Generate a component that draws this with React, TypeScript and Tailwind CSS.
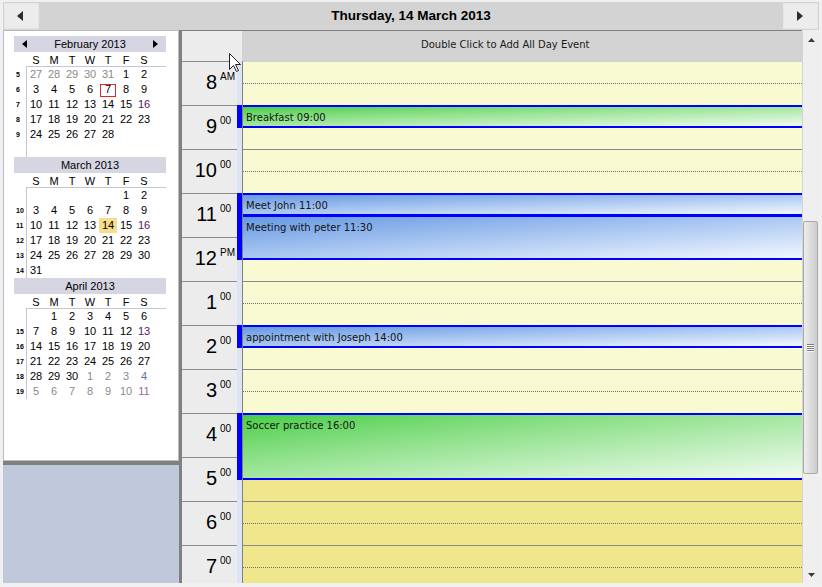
const HOURS = [
  { n: "8", s: "AM" },
  { n: "9", s: "00" },
  { n: "10", s: "00" },
  { n: "11", s: "00" },
  { n: "12", s: "PM" },
  { n: "1", s: "00" },
  { n: "2", s: "00" },
  { n: "3", s: "00" },
  { n: "4", s: "00" },
  { n: "5", s: "00" },
  { n: "6", s: "00" },
  { n: "7", s: "00" },
];

const ROW_H = 44;

const EVENTS = [
  { title: "Breakfast 09:00", start: 9, dur: 0.5, tone: "green" },
  { title: "Meet John 11:00", start: 11, dur: 0.5, tone: "blue" },
  { title: "Meeting with peter 11:30", start: 11.5, dur: 1, tone: "blue" },
  { title: "appointment with Joseph 14:00", start: 14, dur: 0.5, tone: "blue" },
  { title: "Soccer practice 16:00", start: 16, dur: 1.5, tone: "green" },
];

// ~ other month, ! selected (red box), * today, ^ purple, # blue-grey, . empty
const MONTHS = [
  {
    title: "February 2013",
    arrows: true,
    rows: [
      ["5", "27~ 28~ 29~ 30~ 31~ 1 2"],
      ["6", "3 4 5 6 7! 8 9"],
      ["7", "10 11 12 13 14 15 16^"],
      ["8", "17 18 19 20 21 22 23"],
      ["9", "24 25 26 27 28 . ."],
      ["", ". . . . . . ."],
    ],
  },
  {
    title: "March 2013",
    arrows: false,
    rows: [
      ["", ". . . . . 1 2"],
      ["10", "3 4 5 6 7 8 9"],
      ["11", "10 11 12 13 14* 15 16^"],
      ["12", "17 18 19 20 21 22 23"],
      ["13", "24 25 26 27 28 29 30"],
      ["14", "31 . . . . . ."],
    ],
  },
  {
    title: "April 2013",
    arrows: false,
    rows: [
      ["", ". 1 2 3 4 5 6"],
      ["15", "7 8 9 10 11 12 13^"],
      ["16", "14 15 16 17 18 19 20"],
      ["17", "21 22 23 24 25 26 27"],
      ["18", "28 29 30 1~ 2~ 3~ 4#"],
      ["19", "5~ 6~ 7~ 8~ 9~ 10~ 11%"],
    ],
  },
];

function Arrow({ dir, w, h, color = "#000" }: { dir: "left" | "right" | "up" | "down"; w: number; h: number; color?: string }) {
  const pts =
    dir === "left"
      ? `${w},0 ${w},${h} 0,${h / 2}`
      : dir === "right"
        ? `0,0 0,${h} ${w},${h / 2}`
        : dir === "up"
          ? `0,${h} ${w},${h} ${w / 2},0`
          : `0,0 ${w},0 ${w / 2},${h}`;
  return (
    <svg width={w} height={h} viewBox={`0 0 ${w} ${h}`} className="block shrink-0">
      <polygon points={pts} fill={color} />
    </svg>
  );
}

function DayCell({ token }: { token: string }) {
  if (token === ".") return <div className="h-[15px]" />;
  const mark = token.slice(-1);
  const text = /[0-9]/.test(mark) ? token : token.slice(0, -1);
  const color =
    mark === "~"
      ? "text-[#8a8a8a]"
      : mark === "^"
        ? "text-[#4e1a5e]"
        : mark === "#"
          ? "text-[#5d7495]"
          : mark === "%"
            ? "text-[#9a6aa0]"
            : "text-black";
  return (
    <div className={`relative h-[15px] text-center leading-[15px] ${color} ${mark === "*" ? "bg-[#f7de8d]" : ""}`}>
      {mark === "!" && <span className="absolute inset-x-[1px] top-[2px] bottom-0 border border-[#e02626]" />}
      <span className="relative">{text}</span>
    </div>
  );
}

function MiniMonth({ title, arrows, rows }: { title: string; arrows: boolean; rows: string[][] }) {
  return (
    <div className="w-[152px] text-[11px]">
      <div className="flex h-[16px] items-center justify-between bg-[#d6d6e3] px-[8px] leading-none">
        {arrows ? <Arrow dir="left" w={5} h={8} /> : <span className="w-[5px]" />}
        <span>{title}</span>
        {arrows ? <Arrow dir="right" w={5} h={8} /> : <span className="w-[5px]" />}
      </div>
      <div className="flex">
        <div className="w-[12px]" />
        <div className="grid h-[15px] flex-1 grid-cols-[repeat(7,18px)] border-b border-[#c5c5d8] pl-[1px] pt-[2px] leading-[12px]">
          {["S", "M", "T", "W", "T", "F", "S"].map((d, i) => (
            <span key={i} className="text-center">{d}</span>
          ))}
        </div>
      </div>
      <div className="flex">
        <div className="w-[12px]">
          {rows.map(([wk], i) => (
            <div key={i} className="h-[15px] pl-[2px] text-[7px] font-bold leading-[15px]">{wk}</div>
          ))}
        </div>
        <div className="grid grid-cols-[repeat(7,18px)] border-l border-[#c5c5d8]">
          {rows.flatMap(([, days], i) => days.split(" ").map((t, j) => <DayCell key={`${i}-${j}`} token={t} />))}
        </div>
      </div>
    </div>
  );
}

function Scrollbar() {
  return (
    <div className="mt-[1px] flex w-[17px] flex-col border-l border-[#d4d4d4] bg-[#efefef]">
      <div className="flex h-[17px] items-center justify-center">
        <Arrow dir="up" w={7} h={4} color="#3c3c3c" />
      </div>
      <div className="h-[173px]" />
      <div className="flex h-[253px] w-[15px] flex-col items-center justify-center gap-[1px] rounded-[2px] border border-[#a9a9a9] bg-linear-to-r from-[#ededed] to-[#cdcdcd]">
        {[0, 1, 2, 3].map((i) => (
          <div key={i} className="h-[1px] w-[7px] bg-[#7d7d7d] shadow-[0_1px_0_#f8f8f8]" />
        ))}
      </div>
      <div className="flex-1" />
      <div className="flex h-[17px] items-center justify-center">
        <Arrow dir="down" w={7} h={4} color="#3c3c3c" />
      </div>
    </div>
  );
}

export default function App() {
  return (
    <div className="relative h-[587px] w-[822px] overflow-hidden bg-[#f0f0f0] px-[3px] pt-[2px] font-['Liberation_Sans',Arial,sans-serif] text-black">
      <header className="flex h-[28px] items-center justify-between bg-[#d3d3d3] px-[1px]">
        <button className="flex h-[26px] w-[35px] items-center justify-center border border-[#e6e6e6] bg-[#ececec] pr-[3px]">
          <Arrow dir="left" w={6} h={10} color="#2b2b2b" />
        </button>
        <h1 className="text-[13.5px] font-bold">Thursday, 14 March 2013</h1>
        <button className="flex h-[26px] w-[35px] items-center justify-center border border-[#e6e6e6] bg-[#ececec]">
          <Arrow dir="right" w={6} h={10} color="#2b2b2b" />
        </button>
      </header>

      <div className="flex h-[553px]">
        <aside className="flex w-[176px] flex-col">
          <div className="flex h-[431px] flex-col border border-[#b7bcc7] bg-white pl-[10px] pt-[5px]">
            {MONTHS.map((m) => (
              <MiniMonth key={m.title} title={m.title} arrows={m.arrows} rows={m.rows} />
            ))}
          </div>
          <div className="h-[4px] bg-[#808080]" />
          <div className="flex-1 bg-[#c0c8db]" />
        </aside>

        <div className="w-[3px] bg-[#808080]" />

        <main className="flex w-[620px] flex-col border-t border-[#808080]">
          <div className="flex h-[30px]">
            <div className="w-[60px] bg-[#ececec]" />
            <div className="flex-1 bg-[#d3d3d3] pl-[179px] pt-[8px] font-['DejaVu_Sans',sans-serif] text-[10px] leading-[12px] text-[#1a1a1a]">
              Double Click to Add All Day Event
            </div>
          </div>

          <div className="flex h-[522px] overflow-hidden">
            <div className="w-[55px] bg-[#ececec]">
              {HOURS.map((h) => (
                <div key={h.n} className="flex h-[44px] shrink-0 items-start justify-end border-t border-[#8a8a8a] pr-[3px] pt-[10px]">
                  <span className="text-[20px] leading-none">{h.n}</span>
                  <span className="ml-[3px] w-[14px] text-[10px] leading-none">{h.s}</span>
                </div>
              ))}
            </div>

            <div className="relative w-[5px] bg-[#dce4f7]">
              {EVENTS.map((e) => (
                <div
                  key={e.title}
                  className="absolute left-0 w-[5px] bg-[#0000ff]"
                  style={{ top: (e.start - 8) * ROW_H, height: e.dur * ROW_H + 1 }}
                />
              ))}
            </div>

            <div className="w-[1px] bg-[#808080]" />

            <div className="relative w-[559px]">
              {HOURS.map((h, i) => (
                <div
                  key={h.n}
                  className={`h-[44px] border-t ${i === 0 ? "border-[#d3d3d3]" : "border-[#8a8a8a]"} ${i < 9 ? "bg-[#fafad2]" : "bg-[#f0e68c]"}`}
                >
                  <div className="mt-[21px] border-t border-dotted border-[#6e6e6e]" />
                </div>
              ))}

              {EVENTS.map((e) => (
                <div
                  key={e.title}
                  className={`absolute inset-x-0 border-y-2 border-[#0000ff] pl-[3px] pt-[5px] font-['DejaVu_Sans',sans-serif] text-[10px] leading-[12px] text-[#141414] ${
                    e.tone === "green"
                      ? "bg-linear-to-br from-[#45cf45] to-[#f0fbf0]"
                      : "bg-linear-to-br from-[#6699e2] to-[#f2f7fe]"
                  }`}
                  style={{ top: (e.start - 8) * ROW_H, height: e.dur * ROW_H + 1 }}
                >
                  {e.title}
                </div>
              ))}
            </div>
          </div>
        </main>

        <Scrollbar />
      </div>

      {/* mouse pointer captured in the shot */}
      <svg className="absolute left-[229px] top-[53px]" width="13" height="20" viewBox="0 0 13 20">
        <polygon points="0.5,0.5 0.5,16.5 4.5,12.5 7.5,18.5 9.5,17.5 6.5,11.5 11.5,11.5" fill="#fff" stroke="#222" strokeWidth="1" strokeLinejoin="miter" />
      </svg>
    </div>
  );
}
